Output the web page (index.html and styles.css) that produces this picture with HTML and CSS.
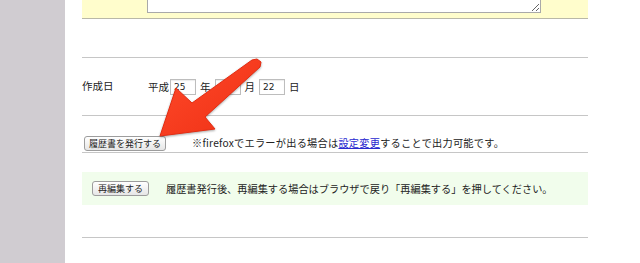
FILE: index.html
```html
<!DOCTYPE html>
<html lang="ja">
<head>
  <meta charset="UTF-8">
  <title>履歴書発行</title>
  <link rel="stylesheet" href="styles.css">
</head>
<body>

  <div class="sidebar"></div>

  <div class="main">
    <div class="memo-box">
      <textarea class="memo"></textarea>
    </div>

    <div class="row empty-row"></div>

    <div class="row date-row">
      <div class="label">作成日</div>
      <div class="date-fields">
        <span>平成</span><input class="num" type="text" value="25">
        <span class="unit">年</span><input class="num" type="text" value="">
        <span class="unit">月</span><input class="num" type="text" value="22">
        <span class="unit">日</span>
      </div>
    </div>

    <div class="row issue-row">
      <button class="btn issue-btn">履歴書を発行する</button>
      <span class="note first-note">※firefoxでエラーが出る場合は<a href="#">設定変更</a>することで出力可能です。</span>
    </div>

    <div class="reedit">
      <div class="reedit-box">
        <button class="btn reedit-btn">再編集する</button>
        <span class="note">履歴書発行後、再編集する場合はブラウザで戻り「再編集する」を押してください。</span>
      </div>
    </div>
  </div>

  <!-- annotation arrow drawn over the page -->
  <svg class="arrow" width="640" height="263" viewBox="0 0 640 263">
    <defs>
      <linearGradient id="arrowFill" x1="0" y1="0" x2="1" y2="1">
        <stop offset="0" stop-color="#ff4a2a"/>
        <stop offset="1" stop-color="#ee2f14"/>
      </linearGradient>
    </defs>
    <polygon points="160,136 176,88 192,103 252,60 257,59 261,62 260,67 205,117 215,129"
             fill="url(#arrowFill)" stroke="#e42c12" stroke-width="1" stroke-linejoin="round"/>
  </svg>

</body>
</html>
```

FILE: styles.css
```css
body {
  margin: 0;
  height: 263px;
  overflow: hidden;
  display: flex;
  font-family: "Noto Sans CJK JP", "Noto Sans", sans-serif;
  font-size: 10px;
  color: #222;
  background: #fff;
}

.sidebar {
  width: 65px;
  flex: none;
  background: #d0ccd1;
}

.main {
  width: 506px;
  margin-left: 17px;
  margin-top: -37px;
}

.memo-box {
  background: #fffdcc;
  padding: 0 0 5px 65px;
  border-bottom: 1px solid #b9b8a8;
}

.memo {
  display: block;
  box-sizing: border-box;
  width: 394px;
  height: 50px;
  margin: 0;
  border: 1px solid #a9a9a9;
  background: #fff;
  resize: both;
}

.row {
  border-bottom: 1px solid #c6c6c6;
}

.empty-row {
  height: 38px;
}

.date-row {
  height: 57px;
  display: flex;
  align-items: center;
}

.label {
  width: 66px;
  font-size: 10.5px;
  margin-top: -2px;
}

.date-fields {
  display: flex;
  align-items: center;
  font-size: 10.5px;
}

.num {
  box-sizing: border-box;
  width: 26px;
  height: 16px;
  margin: 0 0 0 1px;
  padding: 0 3px;
  border: 1px solid #bdbdbd;
  box-shadow: inset 0 1px 1px rgba(0, 0, 0, 0.08);
  font-family: "DejaVu Sans", sans-serif;
  font-size: 9px;
  color: #222;
}

.unit {
  margin: 0 3px 0 4px;
}

.issue-row {
  height: 35px;
  padding-top: 1px;
  display: flex;
  align-items: flex-end;
}

.btn {
  box-sizing: border-box;
  height: 15px;
  padding: 0 4px;
  border: 1px solid #9d9d9d;
  border-radius: 3px;
  background: linear-gradient(#ffffff, #e6e6e6);
  font-family: inherit;
  font-size: 9px;
  line-height: 12px;
  color: #222;
}

.issue-btn {
  width: 82px;
  margin: 0 26px 1px 2px;
}

.issue-row .note {
  margin-bottom: 2px;
}

.note {
  font-size: 10.2px;
}

.first-note {
  letter-spacing: 0.25px;
}

.note a {
  color: #2a2ad0;
}

.reedit {
  padding: 19px 0 32px;
  border-bottom: 1px solid #c6c6c6;
}

.reedit-box {
  height: 33px;
  background: #f1fdec;
  display: flex;
  align-items: center;
  padding-left: 10px;
}

.reedit-btn {
  width: 57px;
  margin-right: 17px;
}

.arrow {
  position: absolute;
  left: 0;
  top: 0;
  pointer-events: none;
  filter: drop-shadow(0 1px 1px rgba(0, 0, 0, 0.35));
}
```
